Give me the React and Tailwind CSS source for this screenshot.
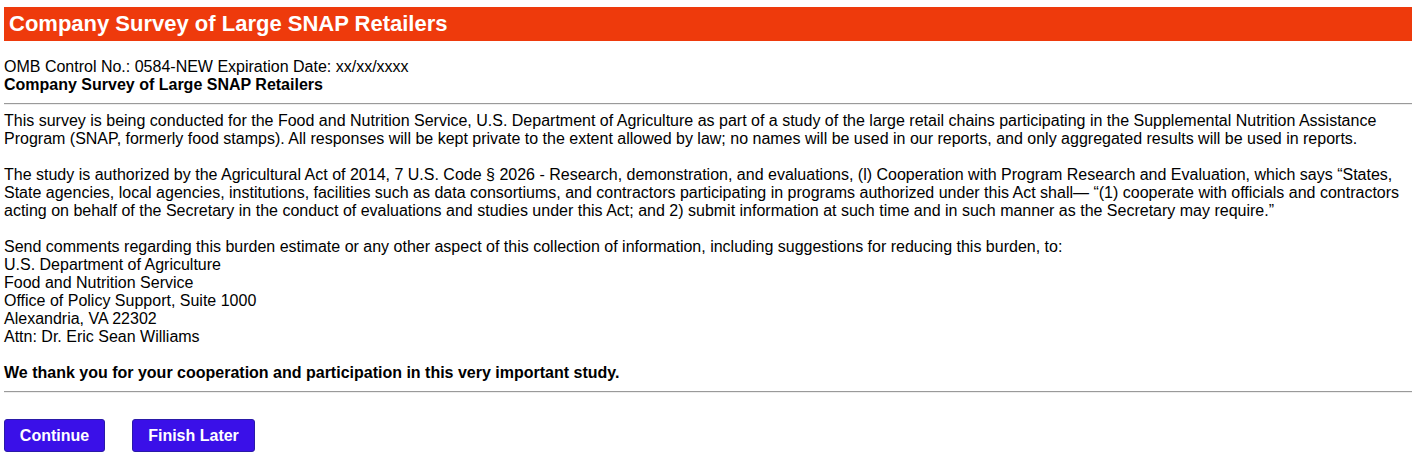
import React from "react";

function Survey() {
  return (
    <div className="min-h-screen bg-white pl-1 pt-[7px] text-[16px] leading-[18px] text-black" style={{ fontFamily: '"Liberation Sans", Arial, sans-serif' }}>
      <div className="flex h-[34px] items-center bg-[#ee3a0c] pl-[5px]">
        <h1 className="text-[22px] leading-[24px] font-bold text-white">Company Survey of Large SNAP Retailers</h1>
      </div>

      <div className="mt-[17px] pr-1">
        <div>OMB Control No.: 0584-NEW Expiration Date: xx/xx/xxxx</div>
        <div className="font-bold">Company Survey of Large SNAP Retailers</div>
      </div>

      <hr className="mt-[9px] mb-[7px] border-t border-b border-t-[#9a9a9a] border-b-[#eeeeee]" />

      <div className="pr-1">
        <p>
          This survey is being conducted for the Food and Nutrition Service, U.S. Department of Agriculture as part of a study of the large retail chains participating in the Supplemental Nutrition Assistance Program (SNAP, formerly food stamps). All responses will be kept private to the extent allowed by law; no names will be used in our reports, and only aggregated results will be used in reports.
        </p>

        <p className="mt-[18px]">
          The study is authorized by the Agricultural Act of 2014, 7 U.S. Code § 2026 - Research, demonstration, and evaluations, (l) Cooperation with Program Research and Evaluation, which says “States, State agencies, local agencies, institutions, facilities such as data consortiums, and contractors participating in programs authorized under this Act shall— “(1) cooperate with officials and contractors acting on behalf of the Secretary in the conduct of evaluations and studies under this Act; and 2) submit information at such time and in such manner as the Secretary may require.”
        </p>

        <div className="mt-[18px]">
          <div>Send comments regarding this burden estimate or any other aspect of this collection of information, including suggestions for reducing this burden, to:</div>
          <div>U.S. Department of Agriculture</div>
          <div>Food and Nutrition Service</div>
          <div>Office of Policy Support, Suite 1000</div>
          <div>Alexandria, VA 22302</div>
          <div>Attn: Dr. Eric Sean Williams</div>
        </div>

        <p className="mt-[18px] font-bold">We thank you for your cooperation and participation in this very important study.</p>
      </div>

      <hr className="mt-[9px] border-t border-b border-t-[#9a9a9a] border-b-[#eeeeee]" />

      <div className="mt-[26px] flex gap-[27px]">
        <button className="h-[33px] w-[101px] rounded-[3px] border border-[#2a1aa8] bg-[#3a10e8] font-bold text-white">
          Continue
        </button>
        <button className="h-[33px] w-[123px] rounded-[3px] border border-[#2a1aa8] bg-[#3a10e8] font-bold text-white">
          Finish Later
        </button>
      </div>
    </div>
  );
}

export default function App() {
  return <Survey />;
}
